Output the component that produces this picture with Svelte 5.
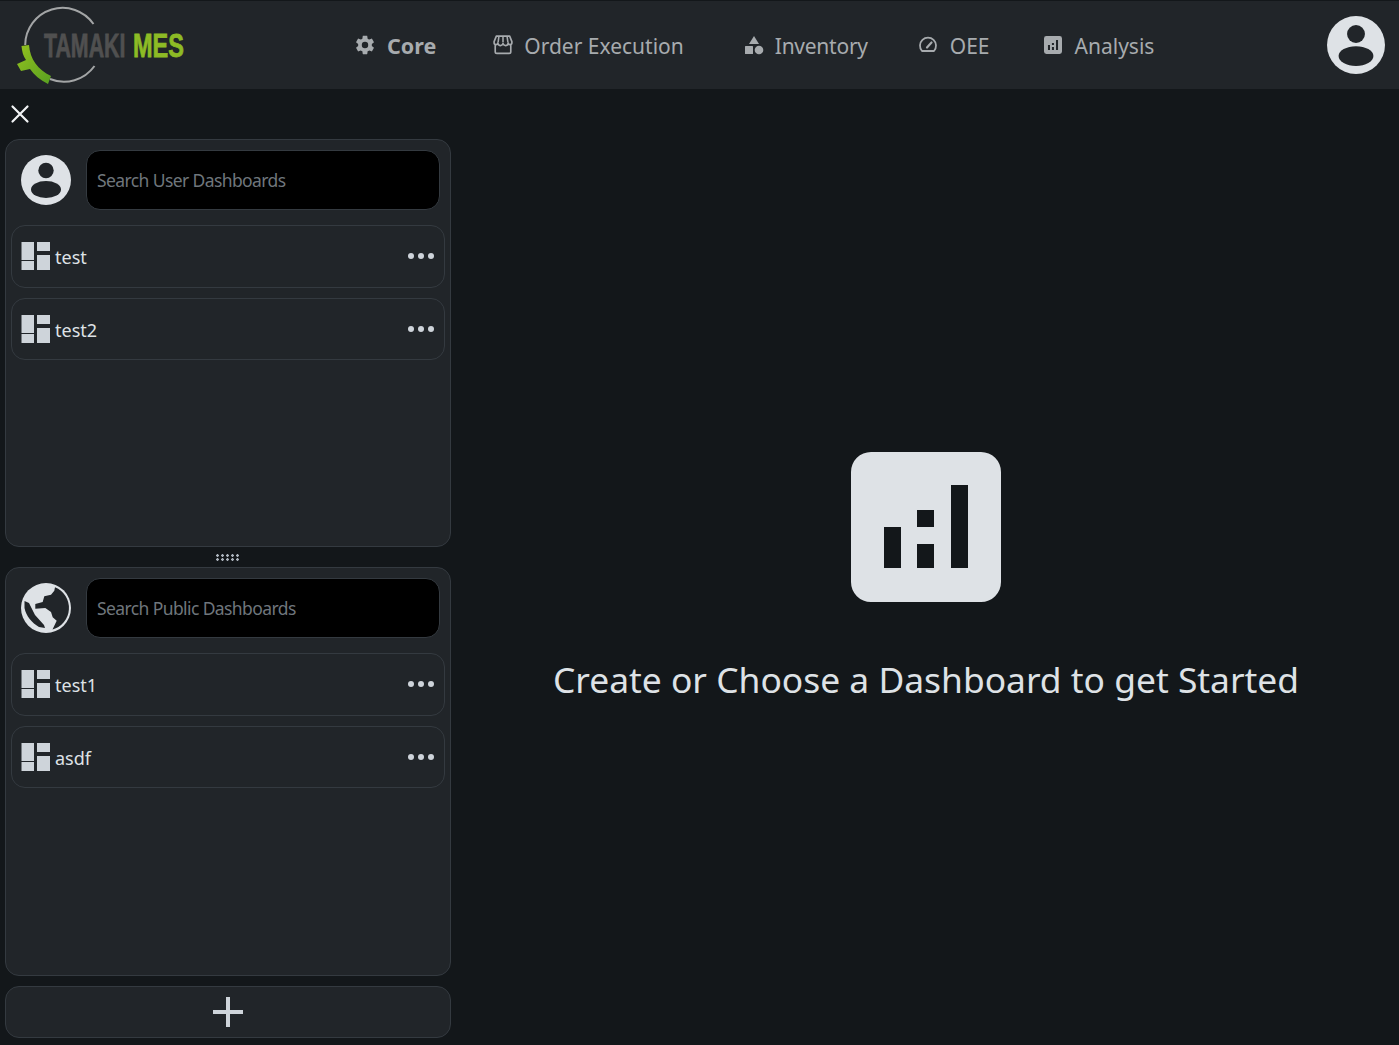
<script>
  const userBoards = ["test", "test2"];
  const publicBoards = ["test1", "asdf"];
</script>

<svelte:head><title>Tamaki MES</title></svelte:head>

{#snippet boardRow(name)}
  <div class="row">
    <svg class="dash" viewBox="0 0 29 28" aria-hidden="true">
      <rect x="0.5" y="0" width="12.5" height="18" />
      <rect x="0.5" y="19" width="12.5" height="9" />
      <rect x="16" y="0" width="13" height="9" />
      <rect x="16" y="13" width="13" height="15" />
    </svg>
    <span class="name">{name}</span>
    <svg class="dots" viewBox="0 0 26 6" aria-hidden="true">
      <circle cx="3" cy="3" r="3" />
      <circle cx="13" cy="3" r="3" />
      <circle cx="23" cy="3" r="3" />
    </svg>
  </div>
{/snippet}

{#snippet personIcon(cls)}
  <svg class={cls} viewBox="0 0 50 50" aria-hidden="true">
    <circle cx="25" cy="25" r="25" fill="#dee2e6" />
    <circle cx="25" cy="15.5" r="7.7" fill="#212529" />
    <ellipse cx="25" cy="34.5" rx="15" ry="8.5" fill="#212529" />
  </svg>
{/snippet}

<header class="topbar">
  <svg class="logo" viewBox="0 0 190 88" aria-label="Tamaki MES">
    <defs>
      <linearGradient id="logoGreen" x1="0" y1="0" x2="1" y2="1">
        <stop offset="0" stop-color="#94c11f" />
        <stop offset="1" stop-color="#58a021" />
      </linearGradient>
    </defs>
    <path d="M93.5 23 A37.5 37.5 0 0 0 25.2 44 M50 78 A37.5 37.5 0 0 0 94.5 65" fill="none" stroke="#a3a5a6" stroke-width="2" />
    <path d="M21.5 45 L29 44 C30 58 38 69 51 75 L48 83 C40 79 34 74 30 68 L21 70 L17 63 L26 59 C23 55 22 50 21.5 45 Z" fill="url(#logoGreen)" />
    <text class="tamaki" transform="translate(44 55.5) scale(.628 1)">TAMAKI</text>
    <text class="mes" transform="translate(133 55.5) scale(.692 1)">MES</text>
  </svg>

  <nav class="links">
    <a class="link active" href="#core">
      <svg viewBox="0 0 24 24" class="nav-icon gear"><path d="M12,15.5A3.5,3.5 0 0,1 8.5,12A3.5,3.5 0 0,1 12,8.5A3.5,3.5 0 0,1 15.5,12A3.5,3.5 0 0,1 12,15.5M19.43,12.97C19.47,12.65 19.5,12.33 19.5,12C19.5,11.67 19.47,11.34 19.43,11L21.54,9.37C21.73,9.22 21.78,8.95 21.66,8.73L19.66,5.27C19.54,5.05 19.27,4.96 19.05,5.05L16.56,6.05C16.04,5.66 15.5,5.32 14.87,5.07L14.5,2.42C14.46,2.18 14.25,2 14,2H10C9.75,2 9.54,2.18 9.5,2.42L9.13,5.07C8.5,5.32 7.96,5.66 7.44,6.05L4.95,5.05C4.73,4.96 4.46,5.05 4.34,5.27L2.34,8.73C2.21,8.95 2.27,9.22 2.46,9.37L4.57,11C4.53,11.34 4.5,11.67 4.5,12C4.5,12.33 4.53,12.65 4.57,12.97L2.46,14.63C2.27,14.78 2.21,15.05 2.34,15.27L4.34,18.73C4.46,18.95 4.73,19.03 4.95,18.95L7.44,17.94C7.96,18.34 8.5,18.68 9.13,18.93L9.5,21.58C9.54,21.82 9.75,22 10,22H14C14.25,22 14.46,21.82 14.5,21.58L14.87,18.93C15.5,18.67 16.04,18.34 16.56,17.94L19.05,18.95C19.27,19.03 19.54,18.95 19.66,18.73L21.66,15.27C21.78,15.05 21.73,14.78 21.54,14.63L19.43,12.97Z" /></svg>
      Core
    </a>
    <a class="link" href="#orders">
      <svg viewBox="0 0 18 18" class="nav-icon store">
        <path d="M3 1 H15 L17 6 V7 A1.7 1.7 0 0 1 13.6 7 A2.3 2.3 0 0 1 9 7.4 A2.3 2.3 0 0 1 4.4 7 A1.7 1.7 0 0 1 1 7 V6 Z M2 9 V15 A1.5 1.5 0 0 0 3.5 16.5 H14.5 A1.5 1.5 0 0 0 16 15 V9" fill="none" stroke="currentColor" stroke-width="1.5" stroke-linejoin="round" />
        <path d="M5.3 1.5 L4.6 6.5 M9 1.5 V6.5 M12.7 1.5 L13.4 6.5" fill="none" stroke="currentColor" stroke-width="1.4" />
      </svg>
      Order Execution
    </a>
    <a class="link" href="#inventory">
      <svg viewBox="0 0 20 20" class="nav-icon shapes">
        <path d="M10 1 L15 9 H5 Z" />
        <rect x="1" y="11" width="8" height="8" rx="0.5" />
        <circle cx="15" cy="15" r="4.3" />
      </svg>
      Inventory
    </a>
    <a class="link" href="#oee">
      <svg viewBox="0 0 20 20" class="nav-icon gauge">
        <path d="M4 16 H16 A8 8 0 1 0 4 16 Z" fill="none" stroke="currentColor" stroke-width="1.8" stroke-linejoin="round" />
        <path d="M9 12.5 L13.5 7.5" fill="none" stroke="currentColor" stroke-width="2.2" stroke-linecap="round" />
      </svg>
      OEE
    </a>
    <a class="link" href="#analysis">
      <svg viewBox="0 0 150 150" class="nav-icon chart">
        <path fill-rule="evenodd" d="M20 0 H130 A20 20 0 0 1 150 20 V130 A20 20 0 0 1 130 150 H20 A20 20 0 0 1 0 130 V20 A20 20 0 0 1 20 0 Z M33 75 V116 H50 V75 Z M66 58 V75 H83 V58 Z M66 92 V116 H83 V92 Z M100 33 V116 H117 V33 Z" />
      </svg>
      Analysis
    </a>
  </nav>

  {@render personIcon("avatar")}
</header>

<div class="page">
  <aside class="sidebar">
    <button class="close" aria-label="Close">
      <svg viewBox="0 0 20 20"><path d="M2.5 2.5 L17.5 17.5 M17.5 2.5 L2.5 17.5" stroke="#f1f3f5" stroke-width="2.2" stroke-linecap="round" /></svg>
    </button>

    <section class="panel">
      <div class="search">
        {@render personIcon("search-icon")}
        <input placeholder="Search User Dashboards" />
      </div>
      <div class="rows">
        {#each userBoards as board}
          {@render boardRow(board)}
        {/each}
      </div>
    </section>

    <div class="handle" aria-hidden="true"></div>

    <section class="panel second">
      <div class="search">
        <svg class="search-icon" viewBox="0 0 50 50" aria-hidden="true">
          <circle cx="25" cy="25" r="25" fill="#dee2e6" />
          <path fill="#212529" d="M3.5 18 L8 20 L14 32 L23 42 L24 45 L18 44 C11 40 5 33 3.5 25 Z" />
          <path fill="#212529" d="M34 4.2 L33.3 7.7 L30 11.7 L23.3 13.3 L21.7 19 L14.3 21 L14.3 25.7 L24.3 25 L30 29 L31.7 34.3 L35.7 37.7 L31.5 46.4 A22.3 22.3 0 0 0 34 4.2 Z" />
        </svg>
        <input placeholder="Search Public Dashboards" />
      </div>
      <div class="rows">
        {#each publicBoards as board}
          {@render boardRow(board)}
        {/each}
      </div>
    </section>

    <button class="add" aria-label="Add dashboard">
      <svg viewBox="0 0 30 30"><path d="M15 0 V30 M0 15 H30" stroke="#ced4da" stroke-width="4" /></svg>
    </button>
  </aside>

  <main class="empty">
    <svg class="big-chart" viewBox="0 0 150 150" aria-hidden="true">
      <path fill-rule="evenodd" d="M20 0 H130 A20 20 0 0 1 150 20 V130 A20 20 0 0 1 130 150 H20 A20 20 0 0 1 0 130 V20 A20 20 0 0 1 20 0 Z M33 75 V116 H50 V75 Z M66 58 V75 H83 V58 Z M66 92 V116 H83 V92 Z M100 33 V116 H117 V33 Z" />
    </svg>
    <h1>Create or Choose a Dashboard to get Started</h1>
  </main>
</div>

<style>
  :global(body) {
    margin: 0;
    background: #13171a;
    color: #dee2e6;
    font-family: "Noto Sans", "Open Sans", sans-serif;
  }

  .topbar {
    height: 88px;
    margin-top: 1px;
    background: #212529;
    display: flex;
    align-items: center;
    position: relative;
  }
  .logo {
    width: 190px;
    height: 88px;
    flex: none;
  }
  .tamaki,
  .mes {
    font-family: "Liberation Sans", sans-serif;
    font-size: 34px;
    font-weight: 700;
    stroke-width: 0.8px;
  }
  .tamaki {
    fill: #505050;
    stroke: #505050;
  }
  .mes {
    fill: #8dbb25;
    stroke: #8dbb25;
  }

  .links {
    display: flex;
    align-items: center;
    margin-left: 166px;
  }
  .link {
    display: flex;
    align-items: center;
    color: #a7abae;
    text-decoration: none;
    font-size: 21px;
    line-height: 30px;
    margin-right: 60px;
    margin-top: 2px;
  }
  .link:nth-child(1) {
    margin-right: 57px;
  }
  .link:nth-child(3) {
    margin-right: 50px;
    letter-spacing: -0.25px;
  }
  .link:nth-child(4) {
    margin-right: 54px;
  }
  .active {
    font-weight: 700;
    font-size: 21.5px;
  }
  .nav-icon {
    fill: currentColor;
    flex: none;
    margin-top: -3px;
  }
  .gear {
    width: 22px;
    height: 22px;
    margin: -3px 11px 0 -2px;
  }
  .store {
    width: 20px;
    height: 20px;
    margin-right: 11px;
  }
  .shapes {
    width: 20px;
    height: 20px;
    margin-right: 11px;
  }
  .gauge {
    width: 20px;
    height: 20px;
    margin-right: 12px;
  }
  .chart {
    width: 18px;
    height: 18px;
    margin-right: 13px;
  }
  :global(.avatar) {
    width: 58px;
    height: 58px;
    position: absolute;
    right: 14px;
    top: 15px;
  }

  .page {
    display: flex;
    height: 956px;
  }
  .sidebar {
    width: 446px;
    margin-left: 5px;
    flex: none;
    display: flex;
    flex-direction: column;
  }
  .close {
    background: none;
    border: 0;
    padding: 0;
    width: 20px;
    height: 20px;
    margin: 15px 0 15px 5px;
  }
  .close svg {
    display: block;
  }
  .panel {
    height: 408px;
    box-sizing: border-box;
    background: #212529;
    border: 1px solid #343a40;
    border-radius: 14px;
    padding: 10px 5px;
  }
  .second {
    height: 409px;
  }
  .search {
    display: flex;
    align-items: center;
    padding: 0 0 0 10px;
    gap: 15px;
    height: 60px;
  }
  :global(.search-icon) {
    width: 50px;
    height: 50px;
    flex: none;
  }
  input {
    width: 354px;
    height: 60px;
    box-sizing: border-box;
    background: #000;
    border: 1px solid #343a40;
    border-radius: 14px;
    padding: 0 10px 1px;
    font: 17.5px "Noto Sans", sans-serif;
    letter-spacing: -0.6px;
    color: #dee2e6;
    outline: none;
  }
  input::placeholder {
    color: #6f767c;
    opacity: 1;
  }
  .rows {
    display: flex;
    flex-direction: column;
    gap: 10px;
    margin-top: 15px;
  }
  .row {
    height: 62.5px;
    box-sizing: border-box;
    border: 1px solid #343a40;
    border-radius: 14px;
    display: flex;
    align-items: center;
    padding: 0 10px 0 9px;
  }
  .dash {
    width: 29px;
    height: 28px;
    fill: #ced4da;
    flex: none;
  }
  .name {
    font-size: 18px;
    margin-left: 5px;
    flex: 1;
    color: #dee2e6;
    padding-top: 2px;
  }
  .dots {
    width: 26px;
    height: 6px;
    fill: #ced4da;
    margin-right: 0;
  }
  .handle {
    height: 20px;
    background-image: radial-gradient(circle at 1.5px 1.5px, #adb5bd 1.2px, transparent 1.5px);
    background-size: 5px 4px;
    background-repeat: repeat;
    background-clip: content-box;
    background-origin: content-box;
    width: 25px;
    box-sizing: border-box;
    padding: 7px 0 5px;
    margin: 0 auto;
  }
  .add {
    margin-top: 10px;
    height: 52px;
    background: #212529;
    border: 1px solid #343a40;
    border-radius: 14px;
    display: flex;
    align-items: center;
    justify-content: center;
    padding: 0;
  }
  .add svg {
    width: 30px;
    height: 30px;
  }

  .empty {
    flex: 1;
    display: flex;
    flex-direction: column;
    align-items: center;
    padding-top: 363px;
    padding-left: 2px;
  }
  .big-chart {
    width: 150px;
    height: 150px;
    fill: #dee2e6;
  }
  h1 {
    margin: 48px 0 0;
    font-size: 35.4px;
    line-height: 58px;
    font-weight: 400;
    color: #dee2e6;
  }
</style>
